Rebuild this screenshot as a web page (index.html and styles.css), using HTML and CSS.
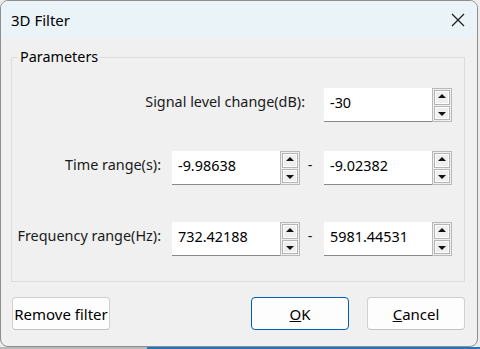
FILE: index.html
```html
<!DOCTYPE html>
<html lang="en">
<head>
  <meta charset="UTF-8">
  <title>3D Filter</title>
  <link rel="stylesheet" href="styles.css">
</head>
<body>
  <div class="window">
    <div class="titlebar">
      <span class="title">3D Filter</span>
      <svg class="close" width="14" height="14" viewBox="0 0 14 14">
        <path d="M1 1 L13 13 M13 1 L1 13" stroke="#1a1a1a" stroke-width="1.2" fill="none"/>
      </svg>
    </div>

    <div class="content">
      <fieldset class="group">
        <legend>Parameters</legend>

        <div class="row">
          <label class="lbl lbl-wide">Signal level change(dB):</label>
          <div class="spin spin-last">
            <input class="num" type="text" value="-30">
            <div class="arrows">
              <span class="arrow up"></span>
              <span class="arrow down"></span>
            </div>
          </div>
        </div>

        <div class="row row-time">
          <label class="lbl">Time range(s):</label>
          <div class="spin">
            <input class="num" type="text" value="-9.98638">
            <div class="arrows">
              <span class="arrow up"></span>
              <span class="arrow down"></span>
            </div>
          </div>
          <span class="dash">-</span>
          <div class="spin">
            <input class="num" type="text" value="-9.02382">
            <div class="arrows">
              <span class="arrow up"></span>
              <span class="arrow down"></span>
            </div>
          </div>
        </div>

        <div class="row row-freq">
          <label class="lbl">Frequency range(Hz):</label>
          <div class="spin">
            <input class="num" type="text" value="732.42188">
            <div class="arrows">
              <span class="arrow up"></span>
              <span class="arrow down"></span>
            </div>
          </div>
          <span class="dash">-</span>
          <div class="spin">
            <input class="num" type="text" value="5981.44531">
            <div class="arrows">
              <span class="arrow up"></span>
              <span class="arrow down"></span>
            </div>
          </div>
        </div>
      </fieldset>

      <div class="footer">
        <button class="btn">Remove filter</button>
        <div class="footer-right">
          <button class="btn btn-default"><u>O</u>K</button>
          <button class="btn"><u>C</u>ancel</button>
        </div>
      </div>
    </div>
  </div>
</body>
</html>
```

FILE: styles.css
```css
html, body {
  margin: 0;
  padding: 0;
}

body {
  width: 480px;
  height: 349px;
  overflow: hidden;
  font-family: 'Noto Sans', 'Open Sans', sans-serif;
  font-size: 14.4px;
  color: #1a1a1a;
  background:
    linear-gradient(to right, #b9b9b9 147px, #2b72b8 147px) bottom / 100% 2px no-repeat,
    #ededed;
}

.window {
  width: 478px;
  height: 347px;
  box-sizing: border-box;
  border: 1px solid #8e8e8e;
  border-radius: 8px;
  background-color: #f0f0f0;
  overflow: hidden;
}

.titlebar {
  height: 37px;
  background-color: #e9f3f8;
  display: flex;
  align-items: center;
  justify-content: space-between;
  padding: 0 12px 0 10px;
}

.title {
  font-size: 15px;
  line-height: 20px;
  color: #000000;
}

.close {
  display: block;
}

.content {
  padding: 9px 12px 0 10px;
}

.group {
  margin: 0;
  padding: 21px 12px 25px 9px;
  border: 1px solid #dcdcdc;
  border-radius: 0;
  min-width: 0;
}

.group legend {
  margin-left: -3px;
  padding: 0 2px;
  line-height: 20px;
  color: #000000;
}

.row {
  display: grid;
  grid-template-columns: minmax(0, 1fr) 128px 24px 128px;
  height: 34px;
}

.row-time {
  margin-top: 29px;
}

.row-freq {
  margin-top: 37px;
}

.lbl {
  justify-self: end;
  padding: 4px 11px 0 0;
  line-height: 20px;
  white-space: nowrap;
}

.lbl-wide {
  grid-column: 1 / 4;
  padding-right: 19px;
}

.spin {
  display: flex;
  height: 34px;
  min-width: 0;
}

.spin-last {
  grid-column: 4;
}

.num {
  width: 108px;
  min-width: 0;
  height: 34px;
  box-sizing: border-box;
  margin: 0;
  padding: 0 4px 5px 6px;
  border: none;
  border-bottom: 1px solid #8a8a8a;
  background-color: #ffffff;
  font-family: inherit;
  font-size: 14.4px;
  line-height: 20px;
  color: #000000;
}

.arrows {
  width: 20px;
  flex: none;
  display: flex;
  flex-direction: column;
  gap: 1px;
  padding: 1px 0;
  box-sizing: border-box;
  border: 1px solid #b8b8b8;
  background-color: #f0f0f0;
}

.arrow {
  flex: 1;
  position: relative;
  margin: 0 1px;
  border: 1px solid #b4b4b4;
  background-color: #efefef;
  box-shadow: inset 0 0 0 1px #ffffff;
}

.arrow::after {
  content: "";
  position: absolute;
  left: 50%;
  top: 50%;
  margin-left: -4px;
  border-left: 4px solid transparent;
  border-right: 4px solid transparent;
}

.up::after {
  margin-top: -3px;
  border-bottom: 4px solid #111111;
}

.down::after {
  margin-top: -1px;
  border-top: 4px solid #111111;
}

.dash {
  text-align: center;
  padding: 4px 4px 0 0;
  line-height: 20px;
}

.footer {
  display: flex;
  justify-content: space-between;
  margin-top: 15px;
  padding-left: 1px;
}

.footer-right {
  display: flex;
  gap: 18px;
}

.btn {
  width: 98px;
  height: 33px;
  box-sizing: border-box;
  margin: 0;
  padding: 0;
  border: 1px solid #d0d0d0;
  border-bottom-color: #c2c2c2;
  border-radius: 4px;
  background-color: #fdfdfd;
  font-family: inherit;
  font-size: 15px;
  color: #000000;
}

.btn-default {
  border: 1px solid #005fb8;
}
```
